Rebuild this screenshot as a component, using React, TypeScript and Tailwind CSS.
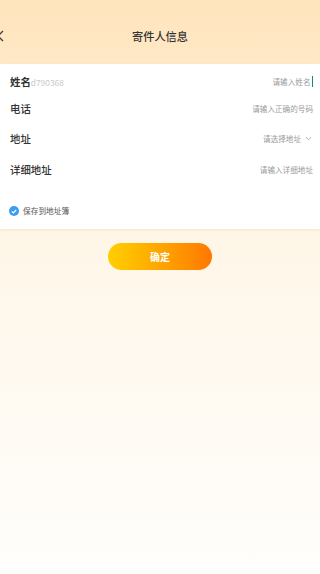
import React from "react";

const rows = [
  { label: "姓名", hint: "请输入姓名", h: "h-[26px]" },
  { label: "电话", hint: "请输入正确的号码", h: "h-[28px]" },
  { label: "地址", hint: "请选择地址", h: "h-[32px]" },
  { label: "详细地址", hint: "请输入详细地址", h: "h-[30px]" },
];

const App = () => {
  return (
    <div
      className="w-[320px] h-[574px] overflow-hidden flex flex-col bg-gradient-to-b from-[#fef0d9] to-[#fffefc]"
      style={{ fontFamily: '"Noto Sans CJK SC", "Noto Sans", sans-serif' }}
    >
      {/* Header */}
      <div className="h-[64px] shrink-0 bg-gradient-to-b from-[#ffe5bd] to-[#ffe8c6] grid grid-cols-[40px_1fr_40px] items-center pt-[8px]">
        <svg width="8" height="12" viewBox="0 0 8 12" className="-ml-[3px]">
          <path d="M6 1 L1 6 L6 11" fill="none" stroke="#444" strokeWidth="1.4" />
        </svg>
        <div className="text-center text-[11.2px] font-medium text-[#333]">寄件人信息</div>
        <div />
      </div>

      {/* Form card */}
      <div className="bg-white pt-[5px] pb-[8px] shadow-[0_1px_2px_rgba(220,190,150,0.35)]">
        {rows.map((r, i) => (
          <div key={r.label} className={`${r.h} flex items-center justify-between pl-[10px] pr-[7px]`}>
            <div className="flex items-baseline">
              <span className={`text-[10.4px] text-[#333] ${i === 0 ? "font-bold" : "font-medium"}`}>
                {r.label}
              </span>
              {i === 0 && <span className="text-[8.4px] text-[#c8c8c8]">d790368</span>}
            </div>
            <div className="flex items-center text-[7.6px] text-[#9a9a9a]">
              <span>{r.hint}</span>
              {i === 0 && <span className="w-[1.5px] h-[11px] bg-[#0b8a78] ml-[1px]" />}
              {i === 2 && (
                <svg width="7" height="5" viewBox="0 0 7 5" className="ml-[4px] mr-[1px]">
                  <path d="M0.8 1 L3.5 3.8 L6.2 1" fill="none" stroke="#aaa" strokeWidth="0.9" />
                </svg>
              )}
            </div>
          </div>
        ))}

        {/* Save checkbox */}
        <div className="mt-[16px] h-[20px] flex items-center pl-[9px] gap-[4px]">
          <div className="w-[10px] h-[10px] rounded-full bg-[#3a9cf5] flex items-center justify-center">
            <svg width="6" height="5" viewBox="0 0 6 5">
              <path d="M0.8 2.5 L2.4 4 L5.2 1" fill="none" stroke="white" strokeWidth="1.1" />
            </svg>
          </div>
          <span className="text-[7.7px] text-[#555]">保存到地址簿</span>
        </div>
      </div>

      {/* Confirm button */}
      <div className="flex justify-center mt-[14px]">
        <button className="w-[104px] h-[27px] rounded-full bg-gradient-to-r from-[#ffcf00] to-[#ff7800] text-white text-[10px] font-bold">
          确定
        </button>
      </div>
    </div>
  );
};

export default App;
